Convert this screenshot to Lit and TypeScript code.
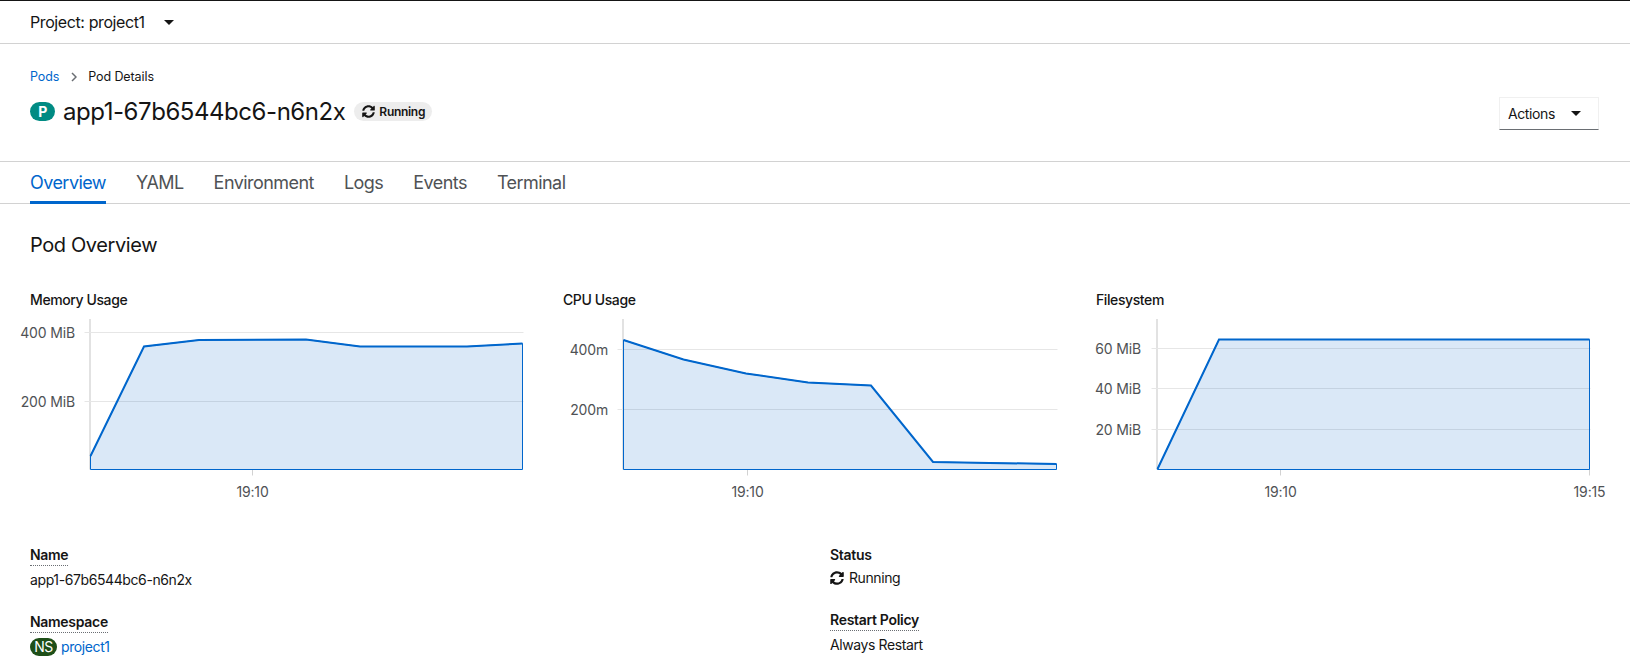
import { LitElement, html, css, svg } from "lit";
import { customElement } from "lit/decorators.js";

const SYNC =
  "M370.72 133.28C339.458 104.008 298.888 87.962 255.848 88c-77.458.068-144.328 53.178-162.791 126.85-1.344 5.363-6.122 9.15-11.651 9.15H24.103c-7.498 0-13.194-6.807-11.807-14.176C33.933 94.924 134.813 8 256 8c66.448 0 126.791 26.136 171.315 68.685L463.03 40.97C478.149 25.851 504 36.559 504 57.941V192c0 13.255-10.745 24-24 24H345.941c-21.382 0-32.09-25.851-16.971-40.971l41.75-41.749zM32 296h134.059c21.382 0 32.09 25.851 16.971 40.971l-41.75 41.75c31.262 29.273 71.835 45.319 114.876 45.28 77.418-.07 144.315-53.144 162.787-126.849 1.344-5.363 6.122-9.15 11.651-9.15h57.304c7.498 0 13.194 6.807 11.807 14.176C478.067 417.076 377.187 504 256 504c-66.448 0-126.791-26.136-171.315-68.685L48.97 471.03C33.851 486.149 8 475.441 8 454.059V320c0-13.255 10.745-24 24-24z";

// chart coordinates are page pixels, shifted by the column origin when drawn
interface Chart {
  title: string;
  x0: number;
  left: number;
  right: number;
  labelEnd: number;
  grid: { y: number; label: string }[];
  ticks: { x: number; label: string }[];
  points: [number, number][];
}

const CHART_TOP = 310;
const AXIS_TOP = 319;
const AXIS_BOTTOM = 469.5;

const CHARTS: Chart[] = [
  {
    title: "Memory Usage",
    x0: 0,
    left: 90.5,
    right: 522.5,
    labelEnd: 75,
    grid: [
      { y: 332.5, label: "400 MiB" },
      { y: 401.5, label: "200 MiB" },
    ],
    ticks: [{ x: 252.5, label: "19:10" }],
    points: [
      [90.5, 456],
      [144, 346.5],
      [199, 340],
      [306, 339.5],
      [360, 346.5],
      [467, 346.5],
      [522.5, 343.5],
    ],
  },
  {
    title: "CPU Usage",
    x0: 533,
    left: 623.5,
    right: 1056.5,
    labelEnd: 608,
    grid: [
      { y: 349.5, label: "400m" },
      { y: 409.5, label: "200m" },
    ],
    ticks: [{ x: 747.5, label: "19:10" }],
    points: [
      [623.5, 340],
      [683.5, 359.5],
      [746, 373.5],
      [808, 382.5],
      [871, 385.5],
      [933, 462],
      [1056.5, 464],
    ],
  },
  {
    title: "Filesystem",
    x0: 1066,
    left: 1157.5,
    right: 1589.5,
    labelEnd: 1141,
    grid: [
      { y: 348.5, label: "60 MiB" },
      { y: 388.5, label: "40 MiB" },
      { y: 429.5, label: "20 MiB" },
    ],
    ticks: [
      { x: 1280.5, label: "19:10" },
      { x: 1589.5, label: "19:15" },
    ],
    points: [
      [1157.5, 469],
      [1219, 339.5],
      [1589.5, 339.5],
    ],
  },
];

const TABS = ["Overview", "YAML", "Environment", "Logs", "Events", "Terminal"];

@customElement("app-root")
export class AppRoot extends LitElement {
  static styles = css`
    :host {
      display: block;
      height: 666px;
      overflow: hidden;
      background: #fff;
      color: #151515;
      font-family: "Inter", "Liberation Sans", sans-serif;
      font-size: 14px;
      letter-spacing: -0.4px;
      border-top: 1px solid #151515;
      box-sizing: border-box;
    }
    .project-bar {
      height: 43px;
      box-sizing: border-box;
      border-bottom: 1px solid #d2d2d2;
      padding-left: 30px;
      display: flex;
      align-items: center;
      font-size: 16px;
      gap: 19px;
    }
    .caret {
      width: 0;
      height: 0;
      border-left: 5px solid transparent;
      border-right: 5px solid transparent;
      border-top: 5px solid #151515;
    }
    .head {
      height: 117px;
      box-sizing: border-box;
      padding: 25px 31px 0 30px;
      display: flex;
      justify-content: space-between;
    }
    .crumbs {
      display: flex;
      align-items: center;
      font-size: 12.5px;
      letter-spacing: -0.1px;
      line-height: 16px;
    }
    .crumbs a {
      color: #06c;
    }
    .crumbs svg {
      margin: 0 11px 0 12px;
      width: 6px;
      height: 10px;
    }
    .title-row {
      display: flex;
      align-items: center;
      margin-top: 13px;
      height: 26px;
    }
    .p-badge {
      width: 25px;
      height: 19px;
      border-radius: 10px;
      background: #008b83;
      color: #fff;
      font-size: 14px;
      font-weight: 700;
      display: flex;
      align-items: center;
      justify-content: center;
      margin-right: 8px;
    }
    h1 {
      font-size: 24px;
      font-weight: 400;
      letter-spacing: -0.45px;
      margin: 0;
    }
    .status-pill {
      display: flex;
      align-items: center;
      gap: 4px;
      height: 19px;
      box-sizing: border-box;
      padding: 0 7px 0 8px;
      margin-left: 9px;
      border-radius: 10px;
      background: #ededed;
      font-size: 12px;
      font-weight: 600;
      letter-spacing: -0.3px;
    }
    .actions {
      width: 100px;
      height: 33px;
      box-sizing: border-box;
      margin-top: 28px;
      padding: 0 17px 0 8px;
      border: 1px solid #f0f0f0;
      border-bottom-color: #6a6e73;
      display: flex;
      align-items: center;
      justify-content: space-between;
    }
    .tabs {
      height: 43px;
      box-sizing: border-box;
      padding-left: 30px;
      display: flex;
      gap: 30px;
      border-top: 1px solid #d2d2d2;
      border-bottom: 1px solid #d2d2d2;
      font-size: 18px;
      letter-spacing: -0.55px;
      color: #4f5255;
    }
    .tab {
      display: flex;
      align-items: center;
      box-sizing: border-box;
      height: 42px;
      padding-bottom: 1px;
    }
    .tab.on {
      color: #06c;
      border-bottom: 3px solid #06c;
      padding-top: 2px;
      padding-bottom: 0;
    }
    h2 {
      font-size: 20px;
      font-weight: 400;
      margin: 0;
      padding: 28px 0 0 30px;
      line-height: 26px;
      height: 46px;
      box-sizing: border-box;
    }
    .charts {
      margin-top: 41px;
      display: flex;
    }
    .chart {
      width: 533px;
      flex: none;
    }
    .chart-title {
      padding-left: 30px;
      font-size: 14px;
      font-weight: 500;
      height: 18px;
      line-height: 18px;
    }
    .chart svg {
      display: block;
      margin-top: 1px;
      overflow: visible;
    }
    .chart text {
      font-size: 14px;
      letter-spacing: -0.15px;
      fill: #4f5255;
      font-family: "Inter", "Liberation Sans", sans-serif;
    }
    .details {
      display: grid;
      grid-template-columns: 800px 1fr;
      padding-left: 30px;
      margin-top: 44px;
    }
    dl {
      margin: 0;
    }
    dt {
      font-weight: 600;
      line-height: 18px;
      letter-spacing: -0.3px;
      width: max-content;
    }
    dt.help {
      border-bottom: 1px dotted #6a6e73;
      padding-bottom: 1px;
    }
    dd {
      margin: 5px 0 24px;
      line-height: 18px;
      display: flex;
      align-items: center;
    }
    dd a {
      color: #06c;
    }
    .ns {
      width: 27px;
      height: 18px;
      border-radius: 9px;
      background: #1e4f18;
      color: #fff;
      display: flex;
      align-items: center;
      justify-content: center;
      font-size: 14px;
      margin-right: 4px;
    }
    .dd-icon {
      margin-right: 5px;
      display: flex;
    }
  `;

  private sync(size: number) {
    return html`<svg width=${size} height=${size} viewBox="0 0 512 512" fill="#151515">
      <path d=${SYNC}></path>
    </svg>`;
  }

  private renderChart(c: Chart) {
    const X = (x: number) => x - c.x0;
    const Y = (y: number) => y - CHART_TOP;
    const line = c.points.map(([x, y]) => `${X(x)},${Y(y)}`).join(" ");
    const area = `${X(c.left)},${Y(AXIS_BOTTOM)} ${line} ${X(c.right)},${Y(AXIS_BOTTOM)}`;
    return svg`
      <svg width="533" height="192" viewBox="0 0 533 192">
        <line x1=${X(c.left) - 0.5} x2=${X(c.left) - 0.5} y1=${Y(AXIS_TOP)} y2=${Y(AXIS_BOTTOM)} stroke="#e2e2e2" stroke-width="2"></line>
        ${c.grid.map(
          (g) => svg`
            <line x1=${X(c.left) - 6} x2=${X(c.right) + 1} y1=${Y(g.y)} y2=${Y(g.y)} stroke="#e6e6e6" stroke-width="1"></line>
            <text x=${X(c.labelEnd)} y=${Y(g.y) + 5} text-anchor="end">${g.label}</text>
          `
        )}
        ${c.ticks.map(
          (t) => svg`
            <line x1=${X(t.x)} x2=${X(t.x)} y1=${Y(AXIS_BOTTOM)} y2=${Y(AXIS_BOTTOM) + 6} stroke="#d2d2d2"></line>
            <text x=${X(t.x)} y=${Y(497)} text-anchor="middle">${t.label}</text>
          `
        )}
        <polygon points=${area} fill="rgba(6,102,204,0.15)" stroke="#06c" stroke-width="1"></polygon>
        <polyline points=${line} fill="none" stroke="#06c" stroke-width="2"></polyline>
      </svg>
    `;
  }

  render() {
    return html`
      <div class="project-bar">
        <span>Project: project1</span>
        <span class="caret"></span>
      </div>
      <div class="head">
        <div>
          <div class="crumbs">
            <a>Pods</a>
            <svg viewBox="0 0 6 10"><path d="M1 1l4 4-4 4" fill="none" stroke="#6a6e73" stroke-width="1.5"></path></svg>
            <span>Pod Details</span>
          </div>
          <div class="title-row">
            <span class="p-badge">P</span>
            <h1>app1-67b6544bc6-n6n2x</h1>
            <span class="status-pill">${this.sync(13)}Running</span>
          </div>
        </div>
        <div class="actions"><span>Actions</span><span class="caret"></span></div>
      </div>
      <div class="tabs">
        ${TABS.map((t, i) => html`<div class="tab ${i === 0 ? "on" : ""}">${t}</div>`)}
      </div>
      <h2>Pod Overview</h2>
      <div class="charts">
        ${CHARTS.map(
          (c) => html`<div class="chart">
            <div class="chart-title">${c.title}</div>
            ${this.renderChart(c)}
          </div>`
        )}
      </div>
      <div class="details">
        <dl>
          <dt class="help">Name</dt>
          <dd>app1-67b6544bc6-n6n2x</dd>
          <dt class="help">Namespace</dt>
          <dd><span class="ns">NS</span><a>project1</a></dd>
        </dl>
        <dl>
          <dt>Status</dt>
          <dd><span class="dd-icon">${this.sync(14)}</span>Running</dd>
          <dt class="help">Restart Policy</dt>
          <dd>Always Restart</dd>
        </dl>
      </div>
    `;
  }
}
